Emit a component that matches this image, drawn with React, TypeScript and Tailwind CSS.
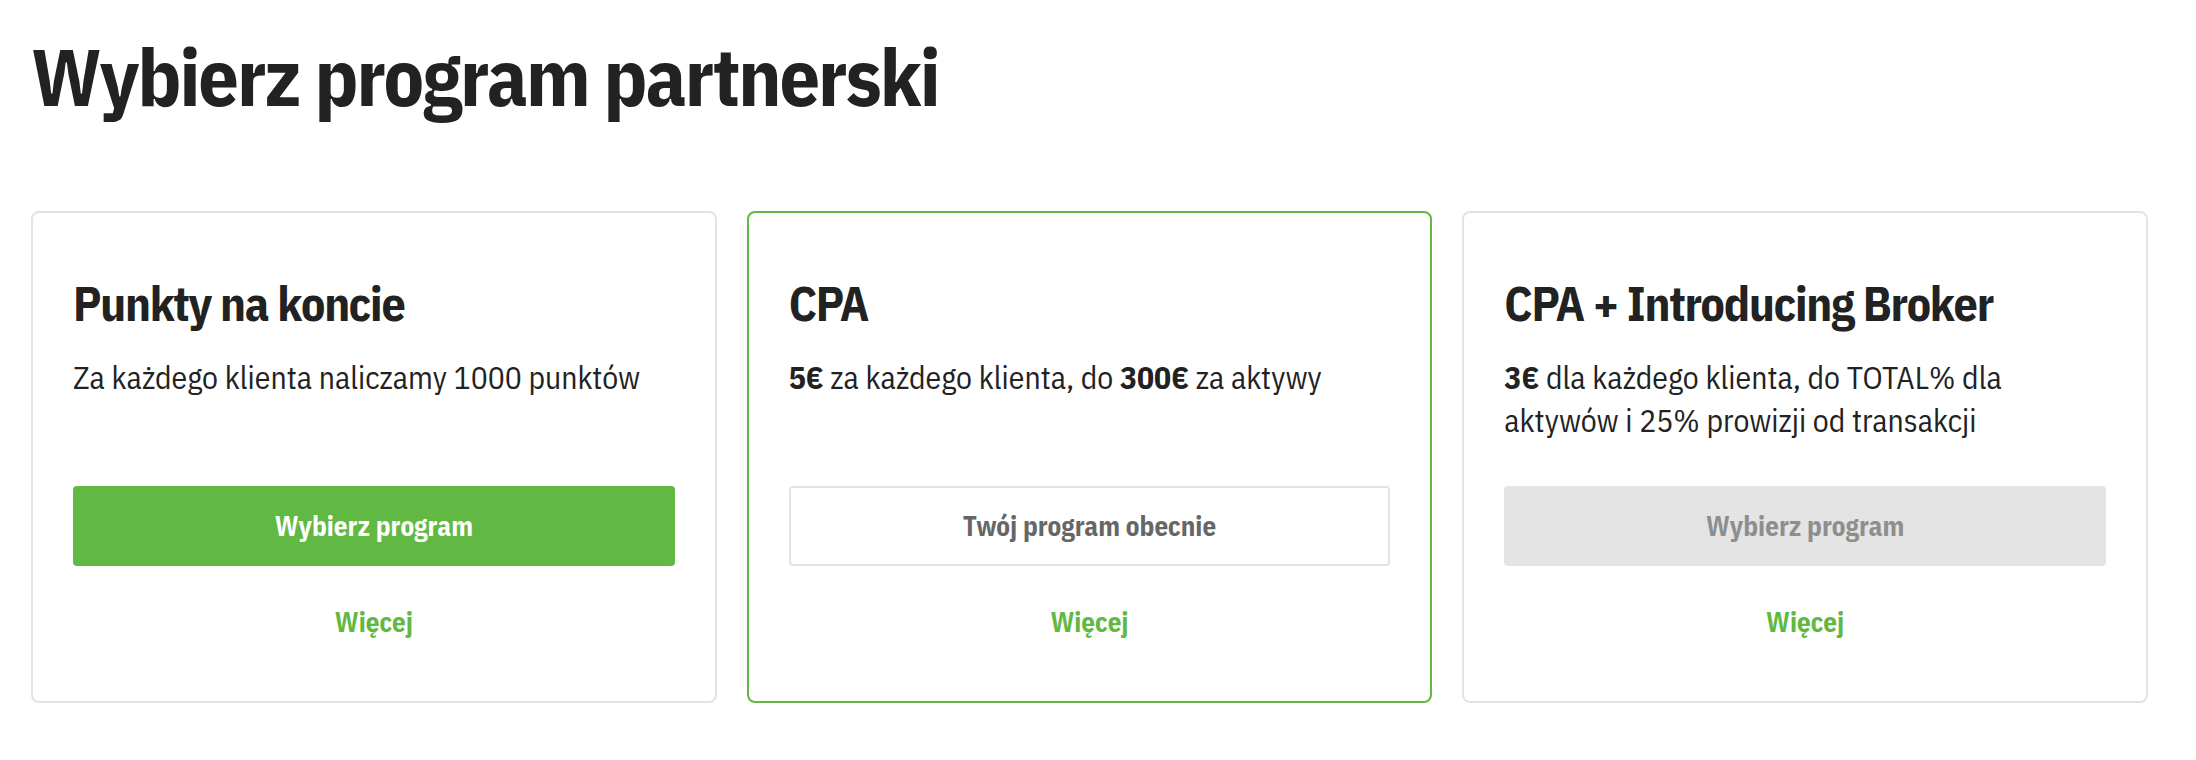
type Program = {
  title: string;
  description: React.ReactNode;
  state: "select" | "current" | "disabled";
};

const programs: Program[] = [
  {
    title: "Punkty na koncie",
    description: <>Za każdego klienta naliczamy 1000 punktów</>,
    state: "select",
  },
  {
    title: "CPA",
    description: (
      <>
        <b className="font-bold">5€</b> za każdego klienta, do <b className="font-bold">300€</b> za aktywy
      </>
    ),
    state: "current",
  },
  {
    title: "CPA + Introducing Broker",
    description: (
      <>
        <b className="font-bold">3€</b> dla każdego klienta, do TOTAL% dla
        <br />
        aktywów i 25% prowizji od transakcji
      </>
    ),
    state: "disabled",
  },
];

function ProgramCard({ program }: { program: Program }) {
  const current = program.state === "current";

  return (
    <div
      className={
        current
          ? "flex flex-col rounded-lg border-2 border-[#61b842] px-10 pt-[61px] pb-[59px]"
          : "flex flex-col rounded-lg border-2 border-[#e3e3e3] px-10 pt-[61px] pb-[59px]"
      }
    >
      <h2 className="text-[48px] font-bold leading-[58px] tracking-tight text-[#222]">{program.title}</h2>
      <p className="mt-6 min-h-[86px] text-[31.6px] leading-[43px] text-[#222]">{program.description}</p>

      {program.state === "select" && (
        <button className="mt-11 h-20 w-full rounded bg-[#61b842] text-[27px] font-bold text-white">
          Wybierz program
        </button>
      )}
      {program.state === "current" && (
        <button className="mt-11 h-20 w-full rounded border-2 border-[#e3e3e3] bg-white text-[27px] font-bold text-[#666]">
          Twój program obecnie
        </button>
      )}
      {program.state === "disabled" && (
        <button className="mt-11 h-20 w-full rounded bg-[#e4e4e4] text-[27px] font-bold text-[#8e8e8e]" disabled>
          Wybierz program
        </button>
      )}

      <a className="mt-9 text-center text-[27px] font-bold leading-10 text-[#61b842]" href="#">
        Więcej
      </a>
    </div>
  );
}

export default function App() {
  return (
    <main className="min-h-screen bg-white pl-[31px] pt-[28px] font-['IBM_Plex_Sans_Condensed','Roboto_Condensed',sans-serif]">
      <h1 className="text-[80px] font-bold leading-[96px] tracking-tight text-[#222]">Wybierz program partnerski</h1>

      <div className="mt-[87px] grid w-[2117px] grid-cols-3 gap-[30px]">
        {programs.map((program) => (
          <ProgramCard key={program.title} program={program} />
        ))}
      </div>
    </main>
  );
}
